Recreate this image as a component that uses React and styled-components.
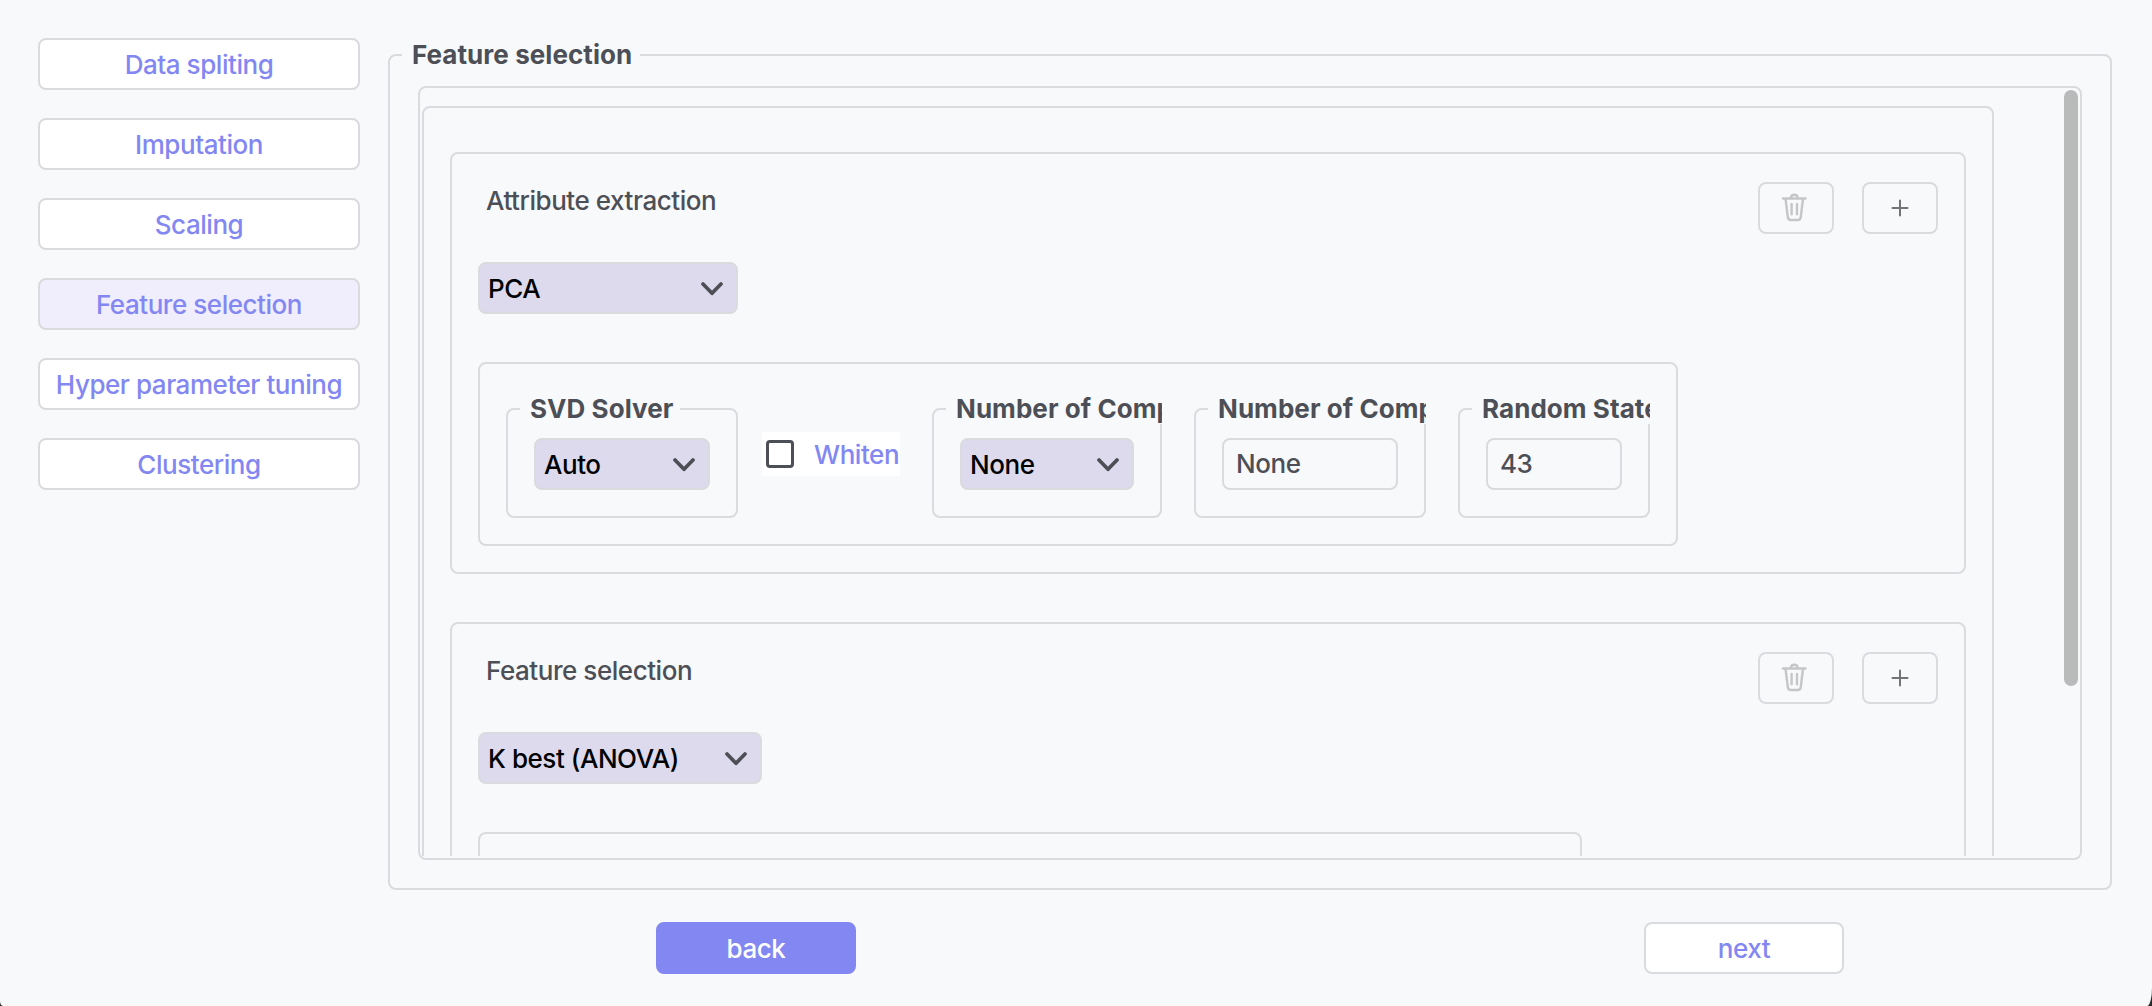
import React from "react";
import styled, { createGlobalStyle } from "styled-components";

const Global = createGlobalStyle`
  * { box-sizing: border-box; }
  body { margin: 0; background: #2a2a2c; }
  body, button, input {
    font-family: Inter, "Liberation Sans", sans-serif;
    font-size: 26px;
    font-weight: 450;
    letter-spacing: -0.45px;
  }
`;

const line = "2px solid #dadbde";

const Page = styled.div`
  display: flex;
  gap: 28px;
  width: 2152px;
  height: 1006px;
  padding: 38px 40px 0 38px;
  overflow: hidden;
  border-radius: 0 0 5px 3px / 0 0 18px 5px;
  color: #4d4f57;
  background: #f8f9fb;
  line-height: 32px;
`;

const Steps = styled.nav`
  display: flex;
  flex-direction: column;
  gap: 28px;
  width: 322px;
  flex: none;
`;

const Button = styled.button`
  display: flex;
  align-items: center;
  justify-content: center;
  width: ${(p) => p.$width || "100%"};
  height: 52px;
  padding: 1px 0 0;
  border: ${(p) => (p.$primary ? "2px solid #8387f1" : line)};
  border-radius: 8px;
  white-space: nowrap;
  color: ${(p) => (p.$primary ? "#fff" : "#8387f1")};
  background: ${(p) => (p.$primary ? "#8387f1" : p.$active ? "#f0edfd" : "#fff")};
`;

const Main = styled.main`
  display: flex;
  flex-direction: column;
  flex: 1;
  min-width: 0;
`;

const Group = styled.fieldset`
  margin: 0;
  min-width: 0;
  border: ${line};
  border-radius: 8px;
`;

const Stage = styled(Group)`
  height: 852px;
  padding: 14px 28px 28px 12px;
`;

const Legend = styled.legend`
  height: ${(p) => p.$height || 30}px;
  line-height: ${(p) => p.$height || 30}px;
  padding: 0 0 0 10px;
  font-weight: 700;
  letter-spacing: 0.06px;
  white-space: nowrap;
  overflow: hidden;
  width: ${(p) => p.$width}px;
`;

const Scroller = styled.section`
  display: flex;
  justify-content: space-between;
  height: 774px;
  margin-left: 16px;
  padding: 2px;
  border: ${line};
  border-radius: 8px;
`;

const Viewport = styled.div`
  width: 1572px;
  height: 766px;
  padding-top: 16px;
  overflow: hidden;
`;

const Thumb = styled.div`
  width: 14px;
  height: 596px;
  border-radius: 7px;
  background: #b9bbba;
`;

const Stack = styled.div`
  display: flex;
  flex-direction: column;
  gap: 48px;
  height: 1000px;
  padding: 44px 26px;
  border: ${line};
  border-radius: 8px;
`;

const Card = styled.article`
  display: flex;
  flex-direction: column;
  align-items: flex-start;
  height: 422px;
  flex: none;
  padding: 28px 26px 26px;
  border: ${line};
  border-radius: 8px;
`;

const CardHead = styled.header`
  display: flex;
  align-items: flex-start;
  gap: 28px;
  width: 100%;
  margin-bottom: 28px;
`;

const Title = styled.div`
  flex: 1;
  padding: 3px 0 0 8px;
`;

const IconButton = styled.button`
  display: flex;
  align-items: center;
  justify-content: center;
  width: 76px;
  height: 52px;
  padding: ${(p) => p.$pad || 0};
  border: ${line};
  border-radius: 8px;
  background: transparent;
`;

const Select = styled.button`
  display: flex;
  align-items: center;
  justify-content: space-between;
  width: ${(p) => p.$width}px;
  height: 52px;
  padding: 0 13px 0 8px;
  border: ${line};
  border-radius: 8px;
  color: #000;
  background: #dcdaec;

  svg {
    margin-top: 2px;
  }
`;

const Params = styled.div`
  display: flex;
  width: ${(p) => p.$width}px;
  height: 184px;
  margin-top: 48px;
  padding: 30px 26px 26px;
  border: ${line};
  border-radius: 8px;
`;

const Field = styled(Group)`
  width: ${(p) => p.$width}px;
  height: 124px;
  margin-right: ${(p) => p.$gap || 0}px;
  padding: 14px 26px 26px 12px;
`;

const FieldBody = styled.div`
  padding-left: 14px;
`;

const Input = styled.input`
  display: block;
  width: 100%;
  height: 52px;
  padding: 0 0 1px 12px;
  border: ${line};
  border-radius: 8px;
  color: #4d4f57;
  background: transparent;
`;

const Check = styled.label`
  display: flex;
  align-items: center;
  gap: 20px;
  width: 138px;
  height: 44px;
  margin: 38px 32px 0 0;
  padding: 1px 0 0 4px;
  color: #8387f1;
  background: #fff;
`;

const Box = styled.span`
  width: 28px;
  height: 28px;
  flex: none;
  margin-bottom: 1px;
  border: 3px solid #4d4f57;
  border-radius: 4px;
`;

const Actions = styled.footer`
  display: flex;
  justify-content: space-between;
  padding: 32px 268px 0;
`;

const Chevron = () => (
  <svg width="22" height="14" viewBox="0 0 22 14" fill="none" stroke="#4d4f57" strokeWidth="3.7" strokeLinecap="round" strokeLinejoin="round">
    <path d="M2 2l9 9.300L20 2" />
  </svg>
);

const Trash = () => (
  <svg width="27" height="30" viewBox="0 0 27 30" fill="none" stroke="#c5c6c7" strokeWidth="2.4" strokeLinecap="round" strokeLinejoin="round">
    <path d="M2 6.500h22.500M4.500 6.500l2.300 18.500q.4 3 3 3h7q2.600 0 3-3L22 6.500" />
    <path d="M9.800 6Q10.200 2.800 13.300 2.800T16.800 6M10.600 12v10.200M16 12v10.200" />
  </svg>
);

const Plus = () => (
  <svg width="18" height="18" viewBox="0 0 18 18" stroke="#747474" strokeWidth="2" strokeLinecap="round">
    <path d="M1.500 9h15M9 1.500v15" />
  </svg>
);

const steps = ["Data spliting", "Imputation", "Scaling", "Feature selection", "Hyper parameter tuning", "Clustering"];

function Head({ children }) {
  return (
    <CardHead>
      <Title>{children}</Title>
      <IconButton $pad="0 3px 2px 0"><Trash /></IconButton>
      <IconButton><Plus /></IconButton>
    </CardHead>
  );
}

function Param({ label, width, legend, gap, children }) {
  return (
    <Field $width={width} $gap={gap}>
      <Legend $width={legend}>{label}</Legend>
      <FieldBody>{children}</FieldBody>
    </Field>
  );
}

export default function App() {
  return (
    <Page>
      <Global />
      <Steps>
        {steps.map((s) => (
          <Button key={s} $active={s === "Feature selection"}>{s}</Button>
        ))}
      </Steps>
      <Main>
        <Stage>
          <Legend $width={238} $height={34}>Feature selection</Legend>
          <Scroller>
            <Viewport>
              <Stack>
                <Card>
                  <Head>Attribute extraction</Head>
                  <Select $width={260}>PCA<Chevron /></Select>
                  <Params $width={1200}>
                    <Param label="SVD Solver" width={232} legend={160} gap={24}>
                      <Select $width={176}>Auto<Chevron /></Select>
                    </Param>
                    <Check><Box />Whiten</Check>
                    <Param label="Number of Components" width={230} legend={216} gap={32}>
                      <Select $width={174}>None<Chevron /></Select>
                    </Param>
                    <Param label="Number of Components" width={232} legend={218} gap={32}>
                      <Input defaultValue="None" />
                    </Param>
                    <Param label="Random State" width={192} legend={178}>
                      <Input defaultValue="43" />
                    </Param>
                  </Params>
                </Card>
                <Card>
                  <Head>Feature selection</Head>
                  <Select $width={284}>K best (ANOVA)<Chevron /></Select>
                  <Params $width={1104} />
                </Card>
              </Stack>
            </Viewport>
            <Thumb />
          </Scroller>
        </Stage>
        <Actions>
          <Button $width="200px" $primary>back</Button>
          <Button $width="200px">next</Button>
        </Actions>
      </Main>
    </Page>
  );
}
